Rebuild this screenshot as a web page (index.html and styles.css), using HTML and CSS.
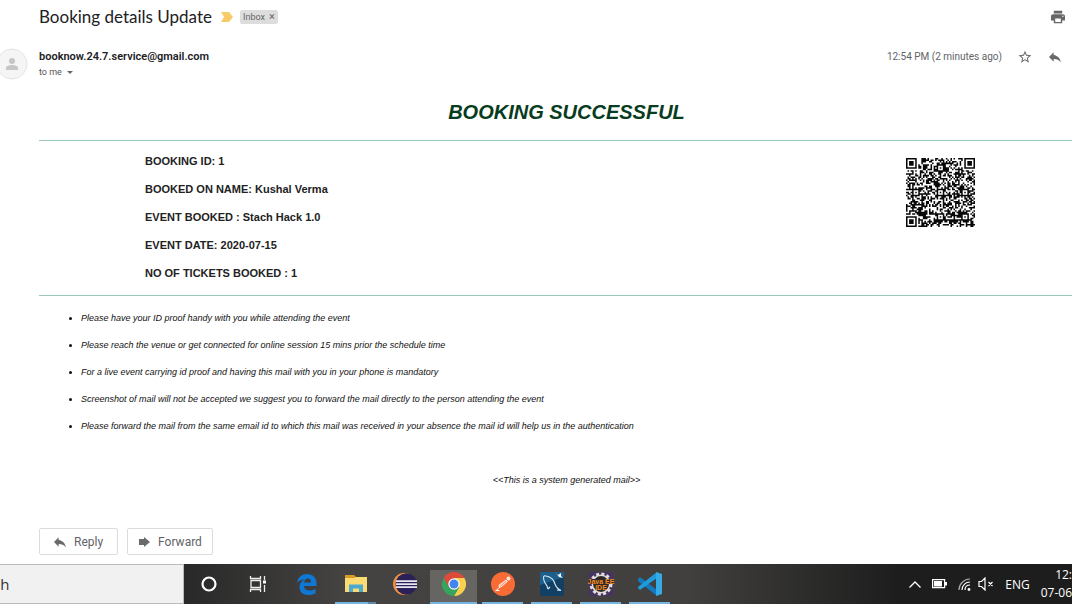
FILE: index.html
```
<!DOCTYPE html>
<html lang="en">
<head>
<meta charset="utf-8">
<title>Booking details Update</title>
<link rel="stylesheet" href="styles.css">
</head>
<body>
<main class="mail">
  <header class="subject">
    <h1 class="subject-title">Booking details Update</h1>
    <svg class="important" width="12" height="10" viewBox="0 0 12 10"><path fill="#f7cb69" d="M0 0h8l4 5-4 5H0l3-5z"/></svg>
    <span class="label">Inbox <button class="label-close" aria-label="Remove label">×</button></span>
    <button class="icon-button print" aria-label="Print"><svg width="14" height="14" viewBox="2 2 20 20"><path fill="#666" d="M19 8H5c-1.66 0-3 1.34-3 3v6h4v4h12v-4h4v-6c0-1.66-1.34-3-3-3zm-3 11H8v-5h8v5zm3-7c-.55 0-1-.45-1-1s.45-1 1-1 1 .45 1 1-.45 1-1 1zm-1-9H6v4h12V3z"/></svg></button>
  </header>

  <section class="sender">
    <svg class="avatar" width="32" height="32" viewBox="0 0 32 32"><circle cx="16" cy="16" r="15" fill="#f5f5f5" stroke="#e4e4e4"/><circle cx="16" cy="13" r="3" fill="#c6c6c6"/><path fill="#c6c6c6" d="M10 22v-2c0-4 12-4 12 0v2z"/></svg>
    <div class="from">
      <strong class="address">booknow.24.7.service@gmail.com</strong>
      <button class="recipient">to me <svg width="6" height="3" viewBox="0 0 6 3"><path fill="#666" d="M0 0h6L3 3z"/></svg></button>
    </div>
    <time class="sent">12:54 PM (2 minutes ago)</time>
    <button class="icon-button star" aria-label="Star"><svg width="14" height="14" viewBox="1 1 22 22"><path fill="#6a6a6a" d="M22 9.24l-7.19-.62L12 2 9.19 8.63 2 9.24l5.46 4.73L5.82 21 12 17.27 18.18 21l-1.63-7.03L22 9.24zM12 15.4l-3.76 2.27 1-4.28-3.32-2.88 4.38-.38L12 6.1l1.71 4.04 4.38.38-3.32 2.88 1 4.28L12 15.4z"/></svg></button>
    <button class="icon-button" aria-label="Reply"><svg width="12" height="10" viewBox="3 5 18 14"><path fill="#6a6a6a" d="M10 9V5l-7 7 7 7v-4.1c5 0 8.500 1.6 11 5.100-1-5-4-10-11-11z"/></svg></button>
  </section>

  <article class="message">
    <h2 class="headline">BOOKING SUCCESSFUL</h2>
    <section class="booking">
      <div class="details">
        <p>BOOKING ID: 1</p>
        <p>BOOKED ON NAME: Kushal Verma</p>
        <p>EVENT BOOKED : Stach Hack 1.0</p>
        <p>EVENT DATE: 2020-07-15</p>
        <p>NO OF TICKETS BOOKED : 1</p>
      </div>
      <svg class="qr" viewBox="0 0 45 45" role="img" aria-label="Booking QR code"><path id="qr-modules" fill="#080808"/></svg>
    </section>
    <ul class="notes">
      <li>Please have your ID proof handy with you while attending the event</li>
      <li>Please reach the venue or get connected for online session 15 mins prior the schedule time</li>
      <li>For a live event carrying id proof and having this mail with you in your phone is mandatory</li>
      <li>Screenshot of mail will not be accepted we suggest you to forward the mail directly to the person attending the event</li>
      <li>Please forward the mail from the same email id to which this mail was received in your absence the mail id will help us in the authentication</li>
    </ul>
    <p class="system-note">&lt;&lt;This is a system generated mail&gt;&gt;</p>
  </article>

  <div class="actions">
    <button class="action reply"><svg width="12" height="10" viewBox="3 5 18 14"><path fill="#6a6a6a" d="M10 9V5l-7 7 7 7v-4.100c5 0 8.500 1.600 11 5.100-1-5-4-10-11-11z"/></svg>Reply</button>
    <button class="action"><svg width="12" height="10" viewBox="0 0 12 10"><path fill="#6a6a6a" d="M1 2h5V0l6 5-6 5V8H1z"/></svg>Forward</button>
  </div>
</main>

<footer class="taskbar">
  <input class="search" aria-label="Search" value="ch">
  <nav class="apps">
    <button class="app" aria-label="Cortana"><svg width="18" height="18" viewBox="0 0 18 18"><circle cx="9" cy="9" r="6.500" fill="none" stroke="#fff" stroke-width="2.200"/></svg></button>
    <button class="app" aria-label="Task view"><svg width="18" height="18" viewBox="0 0 18 18"><path fill="none" stroke="#eee" stroke-width="1.300" d="M1.500 1v2.500h10V1M1.500 17v-2.500h10V17M2 5.500h9.500v7H2zM15.500 1v4M15.500 10v7"/><path fill="#fff" d="M14 5.500h3v3h-3z"/></svg></button>
    <button class="app" aria-label="Edge"><svg width="22" height="22" viewBox="0 0 22 22"><path fill="#0e78d4" d="M1 10C2 4 6 1 11 1c6 0 9.500 4 9.500 9.500V13H8c.2 3 2.700 4.500 6 4.500 2 0 4-.6 5.500-1.500v4.200C17.500 21.400 15 22 12.500 22 7 22 3.500 19 3.500 14c0-3.500 2-6 5-7.500C5.500 6.700 2.600 7.800 1 10zm7.200-.5H15C15 7 14 5.500 11.700 5.500 9.800 5.500 8.400 7.300 8.200 9.500z"/></svg></button>
    <button class="app open stacked" aria-label="File Explorer"><svg width="22" height="20" viewBox="0 0 22 20"><path fill="#d99a25" d="M0 1h9l2 2h11v6H0z"/><path fill="#fbda72" d="M0 4h9l2-1h11v15H0z"/><path fill="#4ba8d0" d="M4 10.500h14V18h-4v-3.500H8V18H4z"/></svg></button>
    <button class="app" aria-label="Eclipse"><svg width="24" height="22" viewBox="0 0 24 22"><circle cx="11" cy="11" r="11" fill="#ef9146"/><circle cx="13" cy="11" r="10.500" fill="#393a3a"/><circle cx="13.500" cy="11" r="10.500" fill="#2b2057"/><path stroke="#e7e6f1" stroke-width="1.800" d="M3 8.200h21M3 11.200h21M3 14.200h21"/></svg></button>
    <button class="app open active" aria-label="Chrome"><svg width="24" height="24" viewBox="0 0 24 24"><path fill="#de4b3b" d="M1.600 6A12 12 0 0 1 22.400 6H12L6.800 15z"/><path fill="#fbd04d" d="M22.400 6A12 12 0 0 1 12 24l5.200-9L12 6z"/><path fill="#35a45d" d="M12 24A12 12 0 0 1 1.600 6l5.200 9 5.200 3 5.200-3z"/><circle cx="12" cy="12" r="5.700" fill="#fff"/><circle cx="12" cy="12" r="4.500" fill="#4385ee"/></svg></button>
    <button class="app open" aria-label="Postman"><svg width="24" height="24" viewBox="0 0 24 24"><circle cx="12" cy="12" r="12" fill="#f96b35"/><path fill="none" stroke="#fff" stroke-width="1" stroke-linecap="round" d="M5 18.500l4-3.500M5 18.500h3"/><circle cx="17.500" cy="6.500" r="2" fill="#ffe5db"/><path fill="#ffdacc" stroke="#fff" stroke-width=".6" d="M8 13l7-5 1.500 1.500L10 15H8z"/><path stroke="#f96b35" stroke-width=".7" d="M9 14.300l6-4.800"/></svg></button>
    <button class="app open" aria-label="MySQL Workbench"><svg width="24" height="24" viewBox="0 0 24 24"><path fill="#1d5f8c" d="M0 0h24v24H0z"/><path fill="#123f64" d="M0 13l24-8v19H0z"/><path fill="none" stroke="#d9e9f2" stroke-width="1.100" d="M8 17l-1-3-2.500-4C3 6 3 3 6 4c5 1 8 4 9 8 1 3 3 5 6 6.500l-4-.5M8 17l2-2"/><path fill="#fff" d="M16 1l2 2 3-2v3l2 2-4-1z"/></svg></button>
    <button class="app open" aria-label="Java EE IDE"><svg class="ide" width="24" height="24" viewBox="0 0 24 24"><path fill="#463362" d="M0 0h24v24H0z"/><circle cx="12" cy="12" r="10" fill="none" stroke="#e2dfdf" stroke-width="3" stroke-dasharray="3 2.240"/><circle cx="12" cy="12" r="8.700" fill="#302727" stroke="#dfdcda" stroke-width="1.500"/><path fill="#302727" d="M0 7h24v5H0z"/><text class="ide-text" x="12" y="12">Java EE</text><text class="ide-text" x="12" y="18">IDE</text></svg></button>
    <button class="app open" aria-label="Visual Studio Code"><svg width="24" height="24" viewBox="0 0 24 24"><path fill="#137abf" d="M0 7l2-2 17 13v6L0 9z"/><path fill="#209bdc" d="M0 16l2 2L19 6V0L0 15z"/><path fill="#36a9e7" d="M18 0l6 2v20l-6 2z"/></svg></button>
  </nav>
  <div class="tray">
    <svg width="12" height="7" viewBox="0 0 12 7"><path fill="none" stroke="#fff" stroke-width="1.300" d="M.5 6.500L6 1l5.500 5.500"/></svg>
    <svg width="15" height="10" viewBox="0 0 15 10"><path fill="none" stroke="#fff" stroke-width="1.200" d="M.6.6h12v8H.6z"/><path fill="#fff" d="M2 2h8v5.500H2zM13 3h2v3.500h-2z"/></svg>
    <div class="tray-pair">
      <svg width="13" height="13" viewBox="0 0 13 13"><path fill="none" stroke="#aaa" stroke-width="1.200" d="M1 12C1 6 6 1 12 1"/><path fill="none" stroke="#fff" stroke-width="1.200" d="M4 12c0-4.500 3.500-8 8-8M7 12c0-3 2-5 5-5"/><circle cx="11" cy="11.500" r="1.400" fill="#fff"/></svg>
      <svg width="16" height="14" viewBox="0 0 16 14"><path fill="none" stroke="#fff" stroke-width="1.200" d="M1 4.500h2.500L7 1v12L3.500 9.500H1zM10.500 5l4 4M14.500 5l-4 4"/></svg>
    </div>
    <span class="language">ENG</span>
    <time class="clock">12:<br>07-06</time>
  </div>
</footer>
<script src="qr.js"></script>
</body>
</html>
```
FILE: styles.css
```
* { box-sizing: border-box; }
body {
  margin: 0;
  min-height: 100vh;
  display: flex;
  flex-direction: column;
  overflow: hidden;
  background: #fff;
  color: #202124;
  font-family: Roboto, "Liberation Sans", sans-serif;
}
button { padding: 0; border: 0; background: none; font: inherit; color: inherit; }
svg { display: block; flex: none; }
h1, h2, p, ul { margin: 0; }

.mail { flex: 1; }
.subject { display: flex; align-items: center; height: 34px; padding: 0 7px 0 39px; }
.subject-title { font: 400 17px/24px Lato, Roboto, sans-serif; }
.important { margin: 0 7px 0 9px; }
.label {
  display: flex;
  align-items: center;
  gap: 4px;
  height: 14px;
  padding: 0 3px;
  border-radius: 2px;
  background: #ddd;
  color: #666;
  font-size: 9px;
}
.label-close { font-size: 11px; line-height: 12px; }
.print { margin-left: auto; }

.sender { display: flex; align-items: flex-start; height: 58px; padding: 15px 11px 0 0; }
.avatar { margin: -1px 0 0 -4px; }
.from { flex: 1; padding-left: 11px; }
.address { display: block; font-size: 11px; font-weight: 600; line-height: 16px; }
.recipient { display: flex; align-items: center; gap: 5px; font-size: 9px; line-height: 14px; color: #555; }
.sent { font-size: 10px; line-height: 16px; color: #5f6368; }
.icon-button { display: flex; align-items: center; height: 16px; }
.star { margin: 0 17px 0 16px; }

.message { margin-left: 39px; font-family: "Liberation Sans", Arial, sans-serif; color: #111; }
.headline {
  padding: 8px 0 16px;
  margin-right: -22px;
  color: #083c20;
  font-size: 20px;
  font-style: italic;
  line-height: 24px;
  text-align: center;
}
.booking {
  display: flex;
  justify-content: space-between;
  align-items: flex-start;
  padding: 6px 97px 8px 106px;
  border-top: 1px solid #9bcbb6;
  border-bottom: 1px solid #9bcbb6;
  color: #222;
}
.details { font-size: 11px; font-weight: 700; line-height: 28px; }
.qr { width: 69px; height: 69px; margin-top: 11px; }
.notes { padding: 9px 0 0 42px; font-size: 9px; font-style: italic; line-height: 27px; }
.system-note { padding-top: 27px; margin-right: -22px; font-size: 9px; font-style: italic; line-height: 26px; text-align: center; }

.actions { display: flex; gap: 9px; padding: 35px 0 0 39px; }
.action {
  display: flex;
  align-items: center;
  gap: 8px;
  height: 27px;
  padding: 0 10px;
  border: 1px solid #dadce0;
  border-radius: 2px;
  color: #5f6368;
  font-size: 12px;
}
.reply { padding: 0 14px; }

.taskbar { display: flex; height: 40px; background: linear-gradient(90deg, #282828 17%, #444341 32%, #41403e 64%, #1d1d1d 84%); color: #fff; }
.search {
  width: 184px;
  border: 1px solid #bbb;
  border-width: 1px 1px 1px 0;
  background: #f1f1f1;
  padding: 0;
  color: #333;
  font: 15px "Open Sans", sans-serif;
  text-indent: -7px;
}
.apps { display: flex; }
.app { display: flex; align-items: center; justify-content: center; width: 49px; border: solid transparent; border-width: 0 4px; }
.open { background: linear-gradient(#76b5e0, #76b5e0) bottom / 100% 2px no-repeat content-box; }
.stacked { background-image: linear-gradient(90deg, #76b5e0 80%, #5789ab 80%); }
.active { width: 47px; margin: 6px 1px 0; border: 0; padding-bottom: 6px; background: linear-gradient(#666562 32px, #76b5e0 32px); }
.tray { display: flex; align-items: center; gap: 11px; margin-left: auto; font: 12px "Open Sans", sans-serif; }
.tray-pair { display: flex; align-items: center; gap: 7px; }
.clock { line-height: 18px; text-align: right; }
.ide { overflow: visible; }
.ide-text { fill: #f28a21; font: 700 7px "Liberation Sans", sans-serif; text-anchor: middle; }
```
FILE: qr.js
```
// Builds the module path of the 45 x 45 code with its finder and alignment squares.
const size = 45;
let seed = 20200715;
const random = () => {
  seed = (seed * 1103515245 + 12345) % 2147483648;
  return seed / 2147483648;
};
const squares = [
  [3, 3, 4], [41, 3, 4], [3, 41, 4],
  [22, 6, 2], [6, 22, 2], [22, 22, 2], [38, 22, 2], [22, 38, 2], [38, 38, 2]
];
let path = "";
for (let y = 0; y < size; y++) {
  for (let x = 0; x < size; x++) {
    let dark = random() < 0.52;
    for (const [cx, cy, reach] of squares) {
      const ring = Math.max(Math.abs(x - cx), Math.abs(y - cy));
      if (ring <= reach) dark = reach === 4 ? ring !== 2 && ring !== 4 : ring !== 1;
    }
    if (dark) path += `M${x} ${y}h1v1h-1z`;
  }
}
document.getElementById("qr-modules").setAttribute("d", path);
```
